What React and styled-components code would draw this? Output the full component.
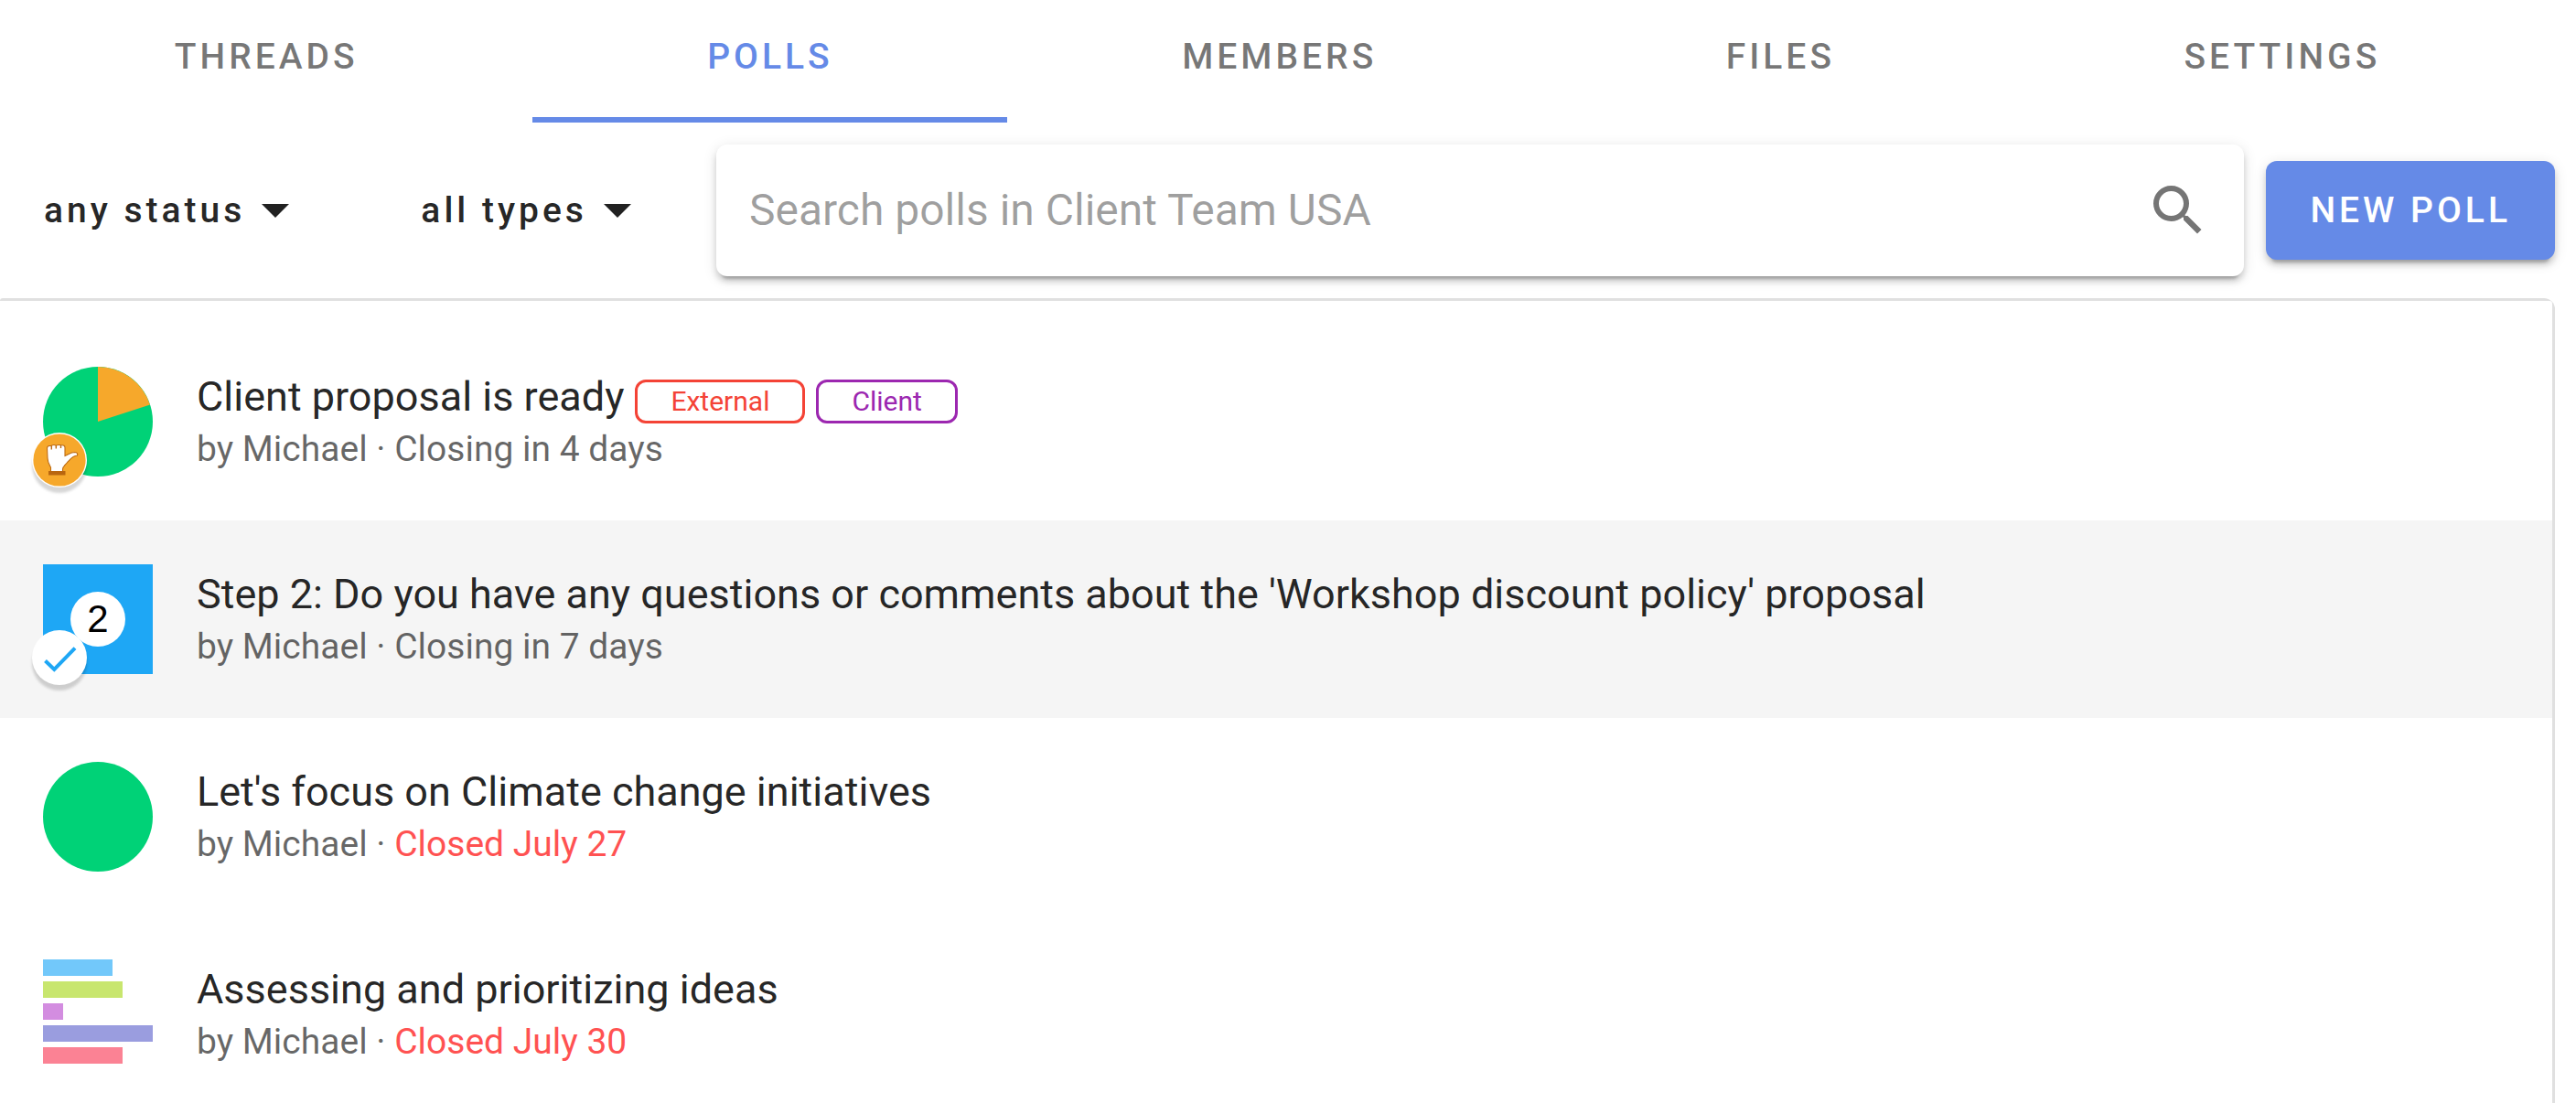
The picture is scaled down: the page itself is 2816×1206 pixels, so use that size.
import React from 'react';
import styled, { createGlobalStyle } from 'styled-components';

const GlobalStyle = createGlobalStyle`
  * { box-sizing: border-box; }
  html, body { margin: 0; background: #fff; }
  body {
    height: 100vh;
    overflow: hidden;
    font-family: Roboto, "Liberation Sans", sans-serif;
    color: rgba(0, 0, 0, 0.87);
  }
  button, input, select { font-family: inherit; color: inherit; }
`;

const elevation = '0 9px 3px -6px rgba(0,0,0,.2), 0 6px 6px 0 rgba(0,0,0,.14), 0 3px 15px 0 rgba(0,0,0,.12)';

const Page = styled.main`
  padding-right: 23px;
`;

const Tabs = styled.nav`
  display: flex;
`;

const Tab = styled.a`
  flex: 1 0 auto;
  display: flex;
  justify-content: center;
  align-items: center;
  height: 134px;
  padding: 0 48px 4px;
  border-bottom: 6px solid ${(p) => (p.$active ? '#658ae7' : 'transparent')};
  color: ${(p) => (p.$active ? '#658ae7' : 'rgba(0, 0, 0, 0.54)')};
  font-size: 39px;
  font-weight: 500;
  letter-spacing: 4px;
  text-transform: uppercase;
  text-decoration: none;
`;

const Toolbar = styled.div`
  display: flex;
  align-items: center;
  gap: 24px;
  padding: 24px 0;
`;

const Filters = styled.div`
  display: flex;
  gap: 42px;
  padding-right: 15px;
`;

const Filter = styled.label`
  display: grid;
  grid-template-columns: auto;
  align-items: center;

  > * { grid-area: 1 / 1; }
  > svg { justify-self: end; margin-right: 54px; pointer-events: none; }
`;

const FilterSelect = styled.select`
  appearance: none;
  field-sizing: content;
  height: 108px;
  padding: 0 102px 0 48px;
  border: 0;
  background: transparent;
  font-size: 39px;
  font-weight: 500;
  letter-spacing: 4px;
`;

const SearchBox = styled.label`
  flex: 1;
  display: flex;
  align-items: center;
  height: 144px;
  padding: 0 36px;
  border-radius: 12px;
  background: #fff;
  box-shadow: ${elevation};
`;

const SearchInput = styled.input`
  flex: 1;
  min-width: 0;
  padding: 0;
  border: 0;
  outline: 0;
  background: transparent;
  font-size: 48px;
  line-height: 60px;

  &::placeholder { color: rgba(0, 0, 0, 0.38); opacity: 1; }
`;

const NewPoll = styled.button`
  height: 108px;
  padding: 0 48px;
  border: 0;
  border-radius: 12px;
  background: #658ae7;
  color: #fff;
  font-size: 39px;
  font-weight: 500;
  letter-spacing: 4px;
  box-shadow: ${elevation};
`;

const Card = styled.section`
  padding: 3px 3px 0 0;
  border-radius: 3px 12px 0 0;
  background: #e0e0e0;
`;

const PollList = styled.ul`
  margin: 0;
  padding: 24px 0;
  list-style: none;
  border-radius: 0 3px 0 0;
  background: #fff;
`;

const PollRow = styled.li`
  display: flex;
  align-items: center;
  gap: 48px;
  height: 216px;
  padding: 0 48px 0 47px;
  background: ${(p) => (p.$highlighted ? '#f5f5f5' : 'transparent')};
`;

const Chart = styled.div`
  position: relative;
  flex: none;
  width: 120px;
  height: 120px;

  > svg { display: block; }
`;

const Badge = styled.span`
  position: absolute;
  left: -12px;
  bottom: -12px;
  width: 60px;
  height: 60px;
  border-radius: 50%;
  background: #fff;
  box-shadow: 0 6px 3px rgba(0, 0, 0, 0.16);

  > svg { display: block; }
`;

const CountTile = styled.div`
  display: flex;
  align-items: center;
  justify-content: center;
  height: 120px;
  background: #1ea7f5;
`;

const Count = styled.span`
  width: 60px;
  border-radius: 50%;
  background: #fff;
  color: #000;
  font-family: "Liberation Sans", sans-serif;
  font-size: 42px;
  line-height: 60px;
  text-align: center;
`;

const PollText = styled.div`
  flex: 1;
  min-width: 0;
`;

const TitleLine = styled.div`
  display: flex;
  align-items: baseline;
  gap: 12px;
`;

const PollTitle = styled.a`
  color: inherit;
  text-decoration: none;
  font-size: 45px;
  line-height: 60px;
`;

const Tag = styled.span`
  height: 48px;
  padding: 0 36px;
  border: 3px solid currentColor;
  border-radius: 12px;
  color: ${(p) => p.$color};
  font-size: 30px;
  line-height: 42px;
`;

const Meta = styled.p`
  margin: 0;
  color: rgba(0, 0, 0, 0.6);
  font-size: 39px;
  line-height: 54px;
`;

const Closed = styled.span`
  color: #ff5252;
`;

const Caret = () => (
  <svg width="30" height="15" viewBox="0 0 30 15" aria-hidden="true">
    <path d="M0 0h30L15 15z" fill="#212121" />
  </svg>
);

const SearchIcon = () => (
  <svg width="72" height="72" viewBox="0 0 24 24" aria-hidden="true">
    <path
      fill="#757575"
      d="M9.5 3A6.5 6.5 0 0 1 16 9.5c0 1.61-.59 3.09-1.56 4.23l.27.27h.79l5 5-1.5 1.5-5-5v-.79l-.27-.27A6.516 6.516 0 0 1 9.5 16 6.5 6.5 0 0 1 3 9.5 6.5 6.5 0 0 1 9.5 3m0 2C7 5 5 7 5 9.5S7 14 9.5 14 14 12 14 9.5 12 5 9.5 5z"
    />
  </svg>
);

const PieChart = ({ split }) => (
  <svg width="120" height="120" viewBox="0 0 120 120" aria-hidden="true">
    <circle cx="60" cy="60" r="60" fill="#00d277" />
    {split && <path d="M60 60V0A60 60 0 0 1 117 41.5z" fill="#f6a82b" />}
  </svg>
);

const AbstainBadge = () => (
  <Badge>
    <svg width="60" height="60" viewBox="0 0 60 60" role="img" aria-label="Abstained">
      <circle cx="30" cy="30" r="28.6" fill="#f6a82b" />
      <path
        d="M20.500 43V38C18 34 17 31 17 28L16.500 17Q16.500 14.700 19 14.500H21Q22 13.500 24 13.500Q25.500 13.500 26.300 14Q28 13.300 29.500 13.500Q31 13.300 32 13.800Q36 13.300 36 16.500V25.500C40 24 42 21.500 47 21.500Q50.500 22 49.500 25C44 25.500 42 29 39 32C37 35 33.500 37 33.500 40V43z"
        fill="#fff"
        stroke="#bd6a12"
        strokeWidth="1.100"
      />
      <path d="M21.300 14.500v4M26.300 14v3.500M31.500 13.800v3.200" stroke="#bd6a12" strokeWidth="1.400" />
      <path d="M18 42h18.500v4.500H18z" fill="#b9660f" />
    </svg>
  </Badge>
);

const AgreedBadge = () => (
  <Badge>
    <svg width="60" height="60" viewBox="0 0 60 60" role="img" aria-label="Done">
      <path d="M14.500 33.500 24.300 43 47 19.700" fill="none" stroke="#1ea7f5" strokeWidth="4" />
    </svg>
  </Badge>
);

const BARS = [
  { width: 76, color: '#72c8fa' },
  { width: 87, color: '#c8e66e' },
  { width: 22, color: '#d38de0' },
  { width: 120, color: '#9a9ddf' },
  { width: 87, color: '#fb8294' },
];

const BarChart = () => (
  <svg width="120" height="120" viewBox="0 0 120 120" aria-hidden="true">
    {BARS.map((bar, i) => (
      <rect key={i} y={i * 24} width={bar.width} height="18" fill={bar.color} />
    ))}
  </svg>
);

const TABS = ['Threads', 'Polls', 'Members', 'Files', 'Settings'];

const POLLS = [
  {
    title: 'Client proposal is ready',
    tags: [['External', '#f44336'], ['Client', '#9c27b0']],
    closing: 'Closing in 4 days',
    chart: <><PieChart split /><AbstainBadge /></>,
  },
  {
    title: "Step 2: Do you have any questions or comments about the 'Workshop discount policy' proposal",
    closing: 'Closing in 7 days',
    highlighted: true,
    chart: <><CountTile><Count>2</Count></CountTile><AgreedBadge /></>,
  },
  {
    title: "Let's focus on Climate change initiatives",
    closed: 'Closed July 27',
    chart: <PieChart />,
  },
  {
    title: 'Assessing and prioritizing ideas',
    closed: 'Closed July 30',
    chart: <BarChart />,
  },
];

export default function App() {
  return (
    <>
      <GlobalStyle />
      <Page>
        <Tabs>
          {TABS.map((name) => (
            <Tab key={name} href={`#${name.toLowerCase()}`} $active={name === 'Polls'}>
              {name}
            </Tab>
          ))}
        </Tabs>
        <Toolbar>
          <Filters>
            <Filter>
              <FilterSelect aria-label="Status"><option>any status</option></FilterSelect>
              <Caret />
            </Filter>
            <Filter>
              <FilterSelect aria-label="Type"><option>all types</option></FilterSelect>
              <Caret />
            </Filter>
          </Filters>
          <SearchBox>
            <SearchInput type="text" aria-label="Search polls" placeholder="Search polls in Client Team USA" />
            <SearchIcon />
          </SearchBox>
          <NewPoll type="button">NEW POLL</NewPoll>
        </Toolbar>
        <Card>
          <PollList>
            {POLLS.map((poll) => (
              <PollRow key={poll.title} $highlighted={poll.highlighted}>
                <Chart>{poll.chart}</Chart>
                <PollText>
                  <TitleLine>
                    <PollTitle href="#poll">{poll.title}</PollTitle>
                    {(poll.tags || []).map(([label, color]) => (
                      <Tag key={label} $color={color}>{label}</Tag>
                    ))}
                  </TitleLine>
                  <Meta>
                    by Michael · {poll.closed ? <Closed>{poll.closed}</Closed> : poll.closing}
                  </Meta>
                </PollText>
              </PollRow>
            ))}
          </PollList>
        </Card>
      </Page>
    </>
  );
}
